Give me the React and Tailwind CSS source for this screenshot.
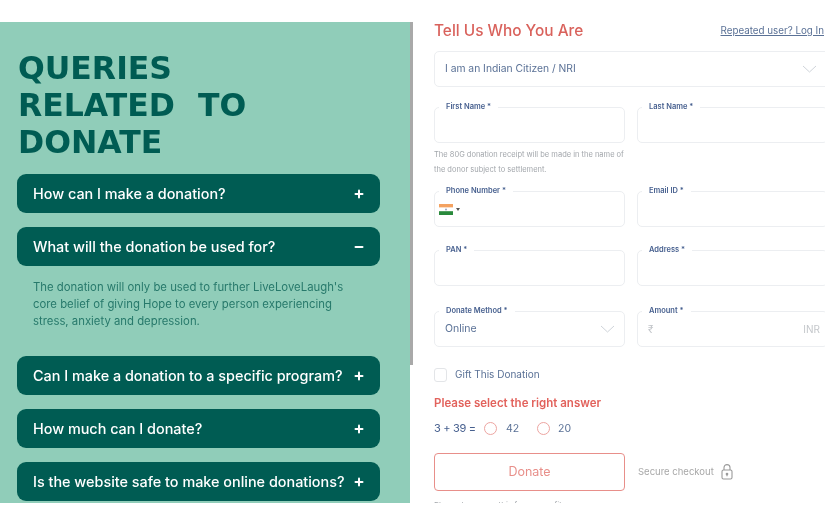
import { Minus, Plus } from 'lucide-react';

const faqsTop = ['How can I make a donation?', 'What will the donation be used for?'];
const faqsBottom = [
  'Can I make a donation to a specific program?',
  'How much can I donate?',
  'Is the website safe to make online donations?',
];

const FaqRow = ({ text, open }) => (
  <div className="flex h-[39px] shrink-0 items-center justify-between rounded-[9px] bg-[#005c53] pl-4 pr-[15px] text-[14.4px] font-medium text-white">
    <span>{text}</span>
    {open ? <Minus size={12} strokeWidth={4} /> : <Plus size={12} strokeWidth={4} />}
  </div>
);

const Chevron = () => (
  <svg width="15" height="8" viewBox="0 0 15 8" fill="none" stroke="#cfd4da" strokeWidth="1">
    <path d="M1 1l6.5 6L14 1" />
  </svg>
);

const Field = ({ label, className = '', children }) => (
  <div className={`relative flex h-9 w-[191px] shrink-0 items-center rounded-[5px] border border-[#eceef1] bg-white px-[10px] ${className}`}>
    <span className="absolute -top-[6px] left-[4px] bg-white px-[7px] text-[7.5px] leading-[10px] font-semibold text-[#47608f]">
      {label}
    </span>
    {children}
  </div>
);

const App = () => {
  return (
    <div className="flex h-[525px] w-[825px] overflow-hidden bg-white pt-[22px] font-['Inter','Noto_Sans',sans-serif] blur-[0.4px]">
      <div className="flex h-[481px] w-[410px] shrink-0 flex-col overflow-hidden bg-[#90cdb9] pl-[17px] pr-[30px]">
        <h1 className="mt-[28px] ml-px font-['DejaVu_Sans',sans-serif] text-[31.5px] leading-[37px] font-bold [word-spacing:12px] text-[#005c53]">
          QUERIES<br />RELATED TO<br />DONATE
        </h1>
        <div className="mt-[13px] flex flex-col gap-[14px]">
          <FaqRow text={faqsTop[0]} />
          <FaqRow text={faqsTop[1]} open />
        </div>
        <p className="mt-[13px] h-[77px] shrink-0 pl-4 text-[11.35px] leading-[17px] text-[#27796b]">
          The donation will only be used to further LiveLoveLaugh's<br />core belief of giving Hope to every person experiencing<br />stress, anxiety and depression.
        </p>
        <div className="flex flex-col gap-[14px]">
          {faqsBottom.map(q => <FaqRow key={q} text={q} />)}
        </div>
      </div>
      <div className="h-[343px] w-[3px] shrink-0 bg-[#a9a9a9]" />

      <div className="flex h-[481px] min-w-0 flex-1 flex-col overflow-hidden pl-[21px]">
        <div className="flex h-[18px] w-[390px] shrink-0 items-center justify-between">
          <h2 className="text-[15.4px] leading-[18px] font-medium text-[#d9625c]">Tell Us Who You Are</h2>
          <a className="text-[9.8px] leading-[18px] text-[#5a7196] underline">Repeated user? Log In</a>
        </div>
        <div className="mt-[11px] flex h-9 w-[400px] shrink-0 items-center justify-between rounded-[5px] border border-[#eceef1] pl-[10px] pr-[16px] text-[10.3px] text-[#5a7196]">
          <span>I am an Indian Citizen / NRI</span>
          <Chevron />
        </div>

        <div className="mt-[20px] flex gap-3">
          <Field label="First Name *" />
          <Field label="Last Name *" />
        </div>
        <p className="mt-[4px] h-[44px] w-[196px] shrink-0 text-[7.5px] leading-[15px] text-[#a2a6ab]">
          The 80G donation receipt will be made in the name of the donor subject to settlement.
        </p>
        <div className="flex gap-3">
          <Field label="Phone Number *" className="!px-[4px]">
            <svg width="14" height="11" viewBox="0 0 14 11">
              <rect width="14" height="3.6" fill="#f4a261" />
              <rect y="3.6" width="14" height="3.6" fill="#fff" />
              <rect y="7.2" width="14" height="3.8" fill="#2a8a3c" />
              <circle cx="7" cy="5.4" r="1" fill="#9aa5c0" />
            </svg>
            <span className="ml-[3px] h-0 w-0 border-x-[2px] border-t-[3px] border-x-transparent border-t-[#555]" />
          </Field>
          <Field label="Email ID *" />
        </div>
        <div className="mt-[23px] flex gap-3">
          <Field label="PAN *" />
          <Field label="Address *" />
        </div>
        <div className="mt-[25px] flex gap-3">
          <Field label="Donate Method *" className="justify-between pr-[9px] text-[10.5px] text-[#5a7196]">
            <span>Online</span>
            <Chevron />
          </Field>
          <Field label="Amount *" className="justify-between text-[10px] text-[#c4c7cb]">
            <span>₹</span>
            <span className="mr-[-3px]">INR</span>
          </Field>
        </div>

        <label className="mt-[20px] flex h-[15px] shrink-0 items-center gap-2 text-[10px] text-[#5a7196]">
          <span className="h-[14px] w-[13px] rounded-[3px] border border-[#e3e5e8]" />
          Gift This Donation
        </label>
        <p className="mt-[14px] text-[11.5px] leading-[15px] font-semibold text-[#e2625c]">Please select the right answer</p>
        <div className="mt-[10px] flex h-[15px] shrink-0 items-center text-[10.5px] text-[#5a7196]">
          <span className="w-[50px] text-[11px] tracking-[-0.3px] text-[#47608f]">3 + 39 =</span>
          <span className="h-[13px] w-[13px] rounded-full border border-[#eda5a1]" />
          <span className="ml-[9px] w-[31px]">42</span>
          <span className="h-[13px] w-[13px] rounded-full border border-[#eda5a1]" />
          <span className="ml-[8px]">20</span>
        </div>
        <div className="mt-[17px] flex shrink-0 items-center gap-[13px]">
          <button className="h-[38px] w-[191px] rounded-[4px] border border-[#e88f8a] text-[12.5px] text-[#e88f8a]">Donate</button>
          <span className="text-[9.5px] text-[#a8a8a8]">Secure checkout</span>
          <svg width="12" height="16" viewBox="0 0 12 16" fill="none" stroke="#9a9a9a" strokeWidth="1.1" className="-ml-[6px]">
            <rect x="1" y="6" width="10" height="9" rx="1.5" />
            <path d="M3 6V3.6a3 3 0 0 1 6 0V6" />
            <circle cx="6" cy="10" r="0.8" fill="#9a9a9a" />
            <path d="M6 10v2.2" />
          </svg>
        </div>
        <p className="mt-[9px] text-[8px] leading-[10px] text-[#a2a6ab]">Please be aware this form uses files</p>
      </div>
    </div>
  );
};

export default App;
